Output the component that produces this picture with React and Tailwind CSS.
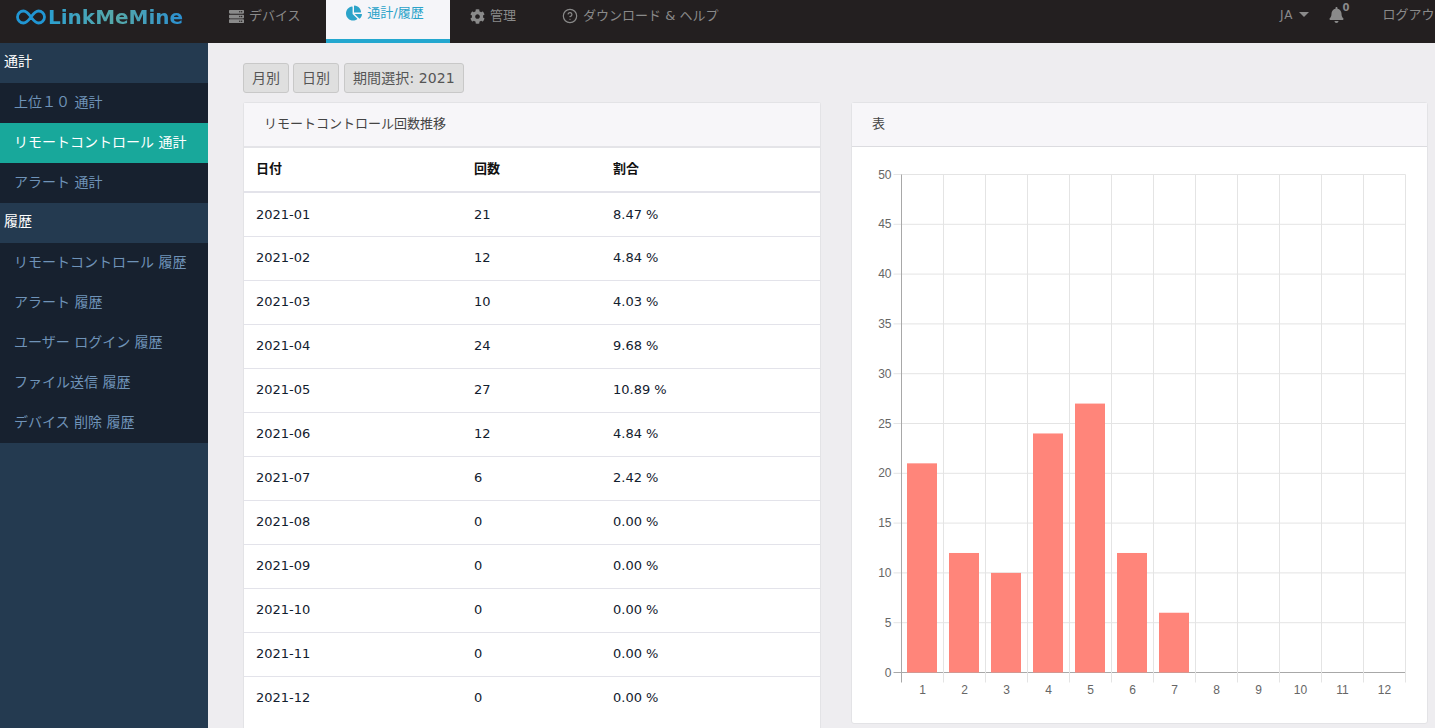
import { CircleHelp } from 'lucide-react';
import { FaServer, FaCog, FaBell, FaChartPie } from 'react-icons/fa';

const FONT = "font-['DejaVu_Sans','Noto_Sans_CJK_JP',sans-serif]";

const rows = [
  ['2021-01', '21', '8.47 %'],
  ['2021-02', '12', '4.84 %'],
  ['2021-03', '10', '4.03 %'],
  ['2021-04', '24', '9.68 %'],
  ['2021-05', '27', '10.89 %'],
  ['2021-06', '12', '4.84 %'],
  ['2021-07', '6', '2.42 %'],
  ['2021-08', '0', '0.00 %'],
  ['2021-09', '0', '0.00 %'],
  ['2021-10', '0', '0.00 %'],
  ['2021-11', '0', '0.00 %'],
  ['2021-12', '0', '0.00 %'],
];

const sideGroups = [
  { title: '通計', items: ['上位１０ 通計', 'リモートコントロール 通計', 'アラート 通計'] },
  { title: '履歴', items: ['リモートコントロール 履歴', 'アラート 履歴', 'ユーザー ログイン 履歴', 'ファイル送信 履歴', 'デバイス 削除 履歴'] },
];

function Logo() {
  return (
    <div className="flex items-center w-[208px] pl-[16px] h-full pb-[9px]">
      <svg width="30" height="16" viewBox="0 0 30 16" fill="none" stroke="#2196d3" strokeWidth="2.8">
        <path d="M15 8c-2.500-3.500-4.500-6-7.500-6a6 6 0 0 0 0 12c3 0 5-2.500 7.500-6s4.500-6 7.500-6a6 6 0 0 1 0 12c-3 0-5-2.500-7.500-6z" />
      </svg>
      <span className="ml-[2px] text-[20px] leading-none font-bold bg-gradient-to-r from-[#2a9fd0] via-[#56a8a8] to-[#2a8fd0] bg-clip-text text-transparent font-['DejaVu_Sans',sans-serif]">
        LinkMeMine
      </span>
    </div>
  );
}

function NavItem({ icon, label, active, className }) {
  if (active) {
    return (
      <div className={`flex items-center justify-center gap-[5px] h-[43px] pb-[13px] pr-[6px] bg-[#f5f5f9] border-b-[4px] border-[#23a7cf] text-[#2ba3c9] text-[13px] ${className}`}>
        {icon}
        <span>{label}</span>
      </div>
    );
  }
  return (
    <div className={`flex items-center h-[43px] pb-[11px] text-[#8a8a8a] text-[13px] ${className}`}>
      {icon}
      <span>{label}</span>
    </div>
  );
}

function TopBar() {
  return (
    <div className="flex h-[43px] shrink-0 bg-[#231f20] overflow-hidden">
      <Logo />
      <NavItem className="pl-[20px] w-[118px] gap-[4px]" icon={<FaServer className="w-[17px] h-[15px]" />} label="デバイス" />
      <NavItem active className="w-[124px]" icon={<FaChartPie className="w-[16px] h-[16px]" />} label="通計/履歴" />
      <NavItem className="pl-[20px] w-[112px] gap-[5px]" icon={<FaCog className="w-[15px] h-[15px]" />} label="管理" />
      <NavItem className="gap-[5px]" icon={<CircleHelp className="w-[16px] h-[16px]" strokeWidth={1.8} />} label="ダウンロード & ヘルプ" />
      <div className="flex items-center h-[43px] pb-[14px] ml-auto text-[#8a8a8a] text-[12px] w-[155px] shrink-0 whitespace-nowrap">
        <span className="tracking-[1px]">JA</span>
        <span className="ml-[5px] w-0 h-0 border-x-[5px] border-x-transparent border-t-[5px] border-t-[#8a8a8a]" />
        <span className="relative ml-[20px]">
          <FaBell className="w-[15px] h-[16px]" />
          <span className="absolute -top-[7px] left-[14px] text-[10px] font-bold">0</span>
        </span>
        <span className="ml-[39px] text-[13px]">ログアウト</span>
      </div>
    </div>
  );
}

function Sidebar() {
  return (
    <div className="w-[208px] shrink-0 bg-[#243a50] text-[14px]">
      {sideGroups.map((g) => (
        <div key={g.title}>
          <div className="h-[40px] flex items-center pl-[4px] pb-[4px] text-white">{g.title}</div>
          {g.items.map((item) => (
            <div
              key={item}
              className={`h-[40px] flex items-center pl-[14px] pb-[2px] ${
                item === 'リモートコントロール 通計' ? 'bg-[#18a89b] text-white' : 'bg-[#17212f] text-[#6f93b8]'
              }`}
            >
              {item}
            </div>
          ))}
        </div>
      ))}
    </div>
  );
}

function RangeButton({ children, className }) {
  return (
    <div className={`h-[30px] px-[8px] flex items-center rounded-[3px] border border-[#c8c8c8] bg-[#dfdfdf] text-[#555] text-[14px] ${className || ''}`}>
      {children}
    </div>
  );
}

function DataTable() {
  return (
    <div className="w-[578px] shrink-0 bg-white rounded-t-[3px] border border-[#e3e3e6] border-b-0 pb-[30px]">
      <div className="h-[45px] flex items-center pl-[20px] pb-[2px] bg-[#f7f6f9] border-b-2 border-[#e4e4e8] text-[13px] text-[#444]">
        リモートコントロール回数推移
      </div>
      <table className="w-full text-[13px] text-[#12202e]">
        <thead>
          <tr className="h-[44px] border-b-2 border-[#e3e3ea] text-left text-[13px] text-[#111]">
            <th className="pl-[12px] pb-[2px] w-[230px] font-bold">日付</th>
            <th className="w-[139px] pb-[2px] font-bold">回数</th>
            <th className="pb-[2px] font-bold">割合</th>
          </tr>
        </thead>
        <tbody>
          {rows.map((r, i) => (
            <tr key={r[0]} className={`h-[44px] border-b ${i < rows.length - 1 ? 'border-[#e3e3ea]' : 'border-transparent'}`}>
              <td className="pl-[12px]">{r[0]}</td>
              <td>{r[1]}</td>
              <td>{r[2]}</td>
            </tr>
          ))}
        </tbody>
      </table>
    </div>
  );
}

function BarChart() {
  const values = [21, 12, 10, 24, 27, 12, 6, 0, 0, 0, 0, 0];
  const left = 49.5;
  const right = 553.5;
  const top = 27.5;
  const bottom = 525.5;
  const stepX = (right - left) / 12;
  const stepY = (bottom - top) / 10;
  const ticks = [50, 45, 40, 35, 30, 25, 20, 15, 10, 5, 0];
  return (
    <svg width="575" height="576" className="block">
      {ticks.map((t, i) => (
        <g key={t}>
          <line x1={left - 8} x2={right} y1={top + i * stepY} y2={top + i * stepY} stroke={t === 0 ? '#a8a8a8' : '#e4e4e4'} />
          <text x={left - 10} y={top + i * stepY + 4} textAnchor="end" fontSize="12" fill="#666" fontFamily="Liberation Sans, sans-serif">{t}</text>
        </g>
      ))}
      {values.map((v, i) => (
        <g key={i}>
          <line x1={left + (i + 1) * stepX} x2={left + (i + 1) * stepX} y1={top} y2={bottom + 10} stroke="#e4e4e4" />
          <rect x={left + 5.5 + i * stepX} y={bottom - v * stepY / 5} width="30" height={v * stepY / 5} fill="#ff857a" />
          <text x={left + (i + 0.5) * stepX} y={bottom + 21} textAnchor="middle" fontSize="12" fill="#666" fontFamily="Liberation Sans, sans-serif">{i + 1}</text>
        </g>
      ))}
      <line x1={left} x2={left} y1={top} y2={bottom + 10} stroke="#a8a8a8" />
    </svg>
  );
}

export default function App() {
  return (
    <div className={`h-[728px] overflow-hidden flex flex-col ${FONT}`}>
      <TopBar />
      <div className="flex flex-1 min-h-0">
        <Sidebar />
        <div className="flex-1 min-w-0 bg-[#eeedf0] pt-[20px] pl-[35px] pr-[8px] overflow-hidden">
          <div className="flex gap-[4px] mb-[9px]">
            <RangeButton>月別</RangeButton>
            <RangeButton>日別</RangeButton>
            <RangeButton className="ml-[1px] tracking-[0.1px]">期間選択: 2021</RangeButton>
          </div>
          <div className="flex items-start gap-[30px]">
            <DataTable />
            <div className="w-[577px] shrink-0 bg-white rounded-[3px] border border-[#e3e3e6]">
              <div className="h-[44px] flex items-center pl-[20px] pb-[2px] bg-[#f7f6f9] border-b border-[#dcdce0] text-[13px] text-[#444]">表</div>
              <BarChart />
            </div>
          </div>
        </div>
      </div>
    </div>
  );
}
